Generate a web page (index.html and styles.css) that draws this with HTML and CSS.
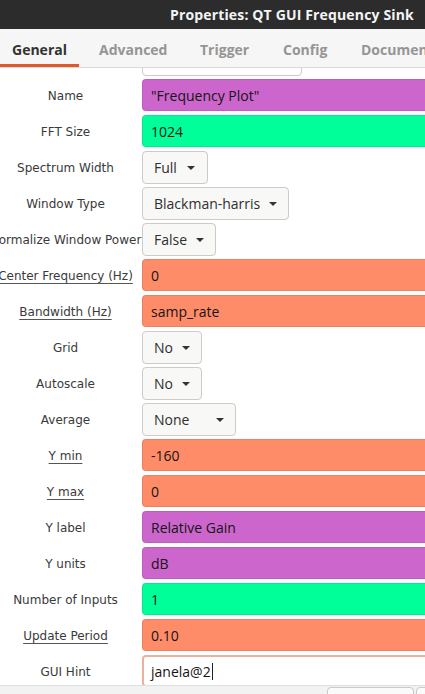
FILE: index.html
```html
<!DOCTYPE html>
<html>
<head>
<meta charset="utf-8">
<link rel="stylesheet" href="styles.css">
</head>
<body>
<div class="window">
  <div class="titlebar"><span class="title">Properties: QT GUI Frequency Sink</span></div>
  <div class="tabs">
    <div class="tab active">General</div>
    <div class="tab">Advanced</div>
    <div class="tab">Trigger</div>
    <div class="tab">Config</div>
    <div class="tab">Documentation</div>
  </div>
  <div class="viewport">
    <div class="rows">
      <div class="row"><div class="label"></div><div class="combo plain wide"></div></div>
      <div class="row"><div class="label">Name</div><div class="entry str">"Frequency Plot"</div></div>
      <div class="row"><div class="label">FFT Size</div><div class="entry int">1024</div></div>
      <div class="row"><div class="label">Spectrum Width</div><div class="combo full">Full<span class="arrow"></span></div></div>
      <div class="row"><div class="label">Window Type</div><div class="combo">Blackman-harris<span class="arrow"></span></div></div>
      <div class="row"><div class="label">Normalize Window Power</div><div class="combo">False<span class="arrow"></span></div></div>
      <div class="row"><div class="label ul">Center Frequency (Hz)</div><div class="entry flt">0</div></div>
      <div class="row"><div class="label ul">Bandwidth (Hz)</div><div class="entry flt">samp_rate</div></div>
      <div class="row"><div class="label">Grid</div><div class="combo">No<span class="arrow"></span></div></div>
      <div class="row"><div class="label">Autoscale</div><div class="combo">No<span class="arrow"></span></div></div>
      <div class="row"><div class="label">Average</div><div class="combo none">None<span class="arrow"></span></div></div>
      <div class="row"><div class="label ul">Y min</div><div class="entry flt">-160</div></div>
      <div class="row"><div class="label ul">Y max</div><div class="entry flt">0</div></div>
      <div class="row"><div class="label">Y label</div><div class="entry str">Relative Gain</div></div>
      <div class="row"><div class="label">Y units</div><div class="entry str">dB</div></div>
      <div class="row"><div class="label">Number of Inputs</div><div class="entry int">1</div></div>
      <div class="row"><div class="label ul">Update Period</div><div class="entry flt">0.10</div></div>
      <div class="row"><div class="label">GUI Hint</div><div class="entry hint">janela@2<span class="caret"></span></div></div>
    </div>
  </div>
  <div class="footer">
    <div class="fbtn first"></div>
    <div class="fbtn"></div>
  </div>
</div>
</body>
</html>
```
FILE: styles.css
```css
html, body {
  margin: 0;
  padding: 0;
  background: #ffffff;
}
.window {
  width: 425px;
  height: 694px;
  overflow: hidden;
  display: flex;
  flex-direction: column;
  font-family: "Open Sans", "DejaVu Sans", sans-serif;
}
.titlebar {
  height: 29px;
  flex: none;
  background: #2c2c2c;
  display: flex;
  align-items: center;
  padding-left: 170px;
  white-space: nowrap;
}
.title {
  color: #f4f4f4;
  font-weight: 700;
  font-size: 14px;
  letter-spacing: 0.15px;
}
.tabs {
  height: 39px;
  flex: none;
  background: #f6f6f6;
  border-bottom: 1px solid #dadada;
  display: flex;
  white-space: nowrap;
  box-sizing: border-box;
}
.tab {
  height: 100%;
  box-sizing: border-box;
  padding: 11px 0 0;
  font-size: 14px;
  font-weight: 700;
  color: #959595;
  flex: none;
}
.tab:nth-child(1) { width: 79px; padding-left: 12px; }
.tab:nth-child(2) { width: 121px; padding-left: 20px; }
.tab:nth-child(3) { width: 83px; padding-left: 0; }
.tab:nth-child(4) { width: 78px; padding-left: 0; }
.tab.active {
  color: #333333;
  border-bottom: 3px solid #e2582b;
}
.viewport {
  flex: 1;
  overflow: hidden;
  background: #ffffff;
}
.rows {
  margin-top: -25px;
  display: flex;
  flex-direction: column;
  gap: 4px;
}
.row {
  display: flex;
  align-items: center;
  height: 32px;
  flex: none;
}
.label {
  width: 131px;
  margin-right: 11px;
  padding-top: 1px;
  flex: none;
  display: flex;
  justify-content: center;
  white-space: nowrap;
  font-family: "DejaVu Sans", sans-serif;
  font-size: 12px;
  color: #3a3a3a;
}
.label.ul {
  text-decoration: underline;
  text-decoration-color: #555;
  text-underline-offset: 3px;
}
.entry {
  height: 32px;
  width: 300px;
  flex: none;
  box-sizing: border-box;
  border-radius: 4px;
  border: 1px solid rgba(0,0,0,0.08);
  padding: 0 8px;
  display: flex;
  align-items: center;
  font-size: 14px;
  color: #141414;
  white-space: nowrap;
}
.entry.str { background: #cc66cc; }
.entry.int { background: #00ff99; }
.entry.flt { background: #ff8c69; }
.entry.hint {
  background: #ffffff;
  border: 2px solid #eab0a0;
  padding-left: 7px;
}
.caret {
  display: inline-block;
  width: 1px;
  height: 17px;
  background: #222;
  margin-left: 1px;
}
.combo {
  height: 33px;
  flex: none;
  box-sizing: border-box;
  border: 1px solid #cfcac5;
  border-radius: 4px;
  background: #f8f8f7;
  padding: 0 11px 0 11px;
  display: flex;
  align-items: center;
  gap: 9px;
  font-size: 14px;
  color: #2e2e2e;
  white-space: nowrap;
}
.combo.plain {
  background: #ffffff;
}
.combo.wide { width: 160px; }
.combo.full { width: 66px; gap: 10px; }
.combo.none { width: 94px; justify-content: space-between; }
.arrow {
  width: 0;
  height: 0;
  border-left: 4.5px solid transparent;
  border-right: 4.5px solid transparent;
  border-top: 4.5px solid #333;
  margin-top: 1px;
}
.footer {
  height: 7px;
  flex: none;
  background: #f2f2f2;
  border-top: 1px solid #dedede;
  display: flex;
  padding-left: 327px;
  gap: 2px;
  padding-top: 1px;
}
.fbtn {
  width: 85px;
  height: 20px;
  border: 1px solid #c9c9c9;
  border-radius: 4px;
  background: #fafafa;
  flex: none;
}
```
